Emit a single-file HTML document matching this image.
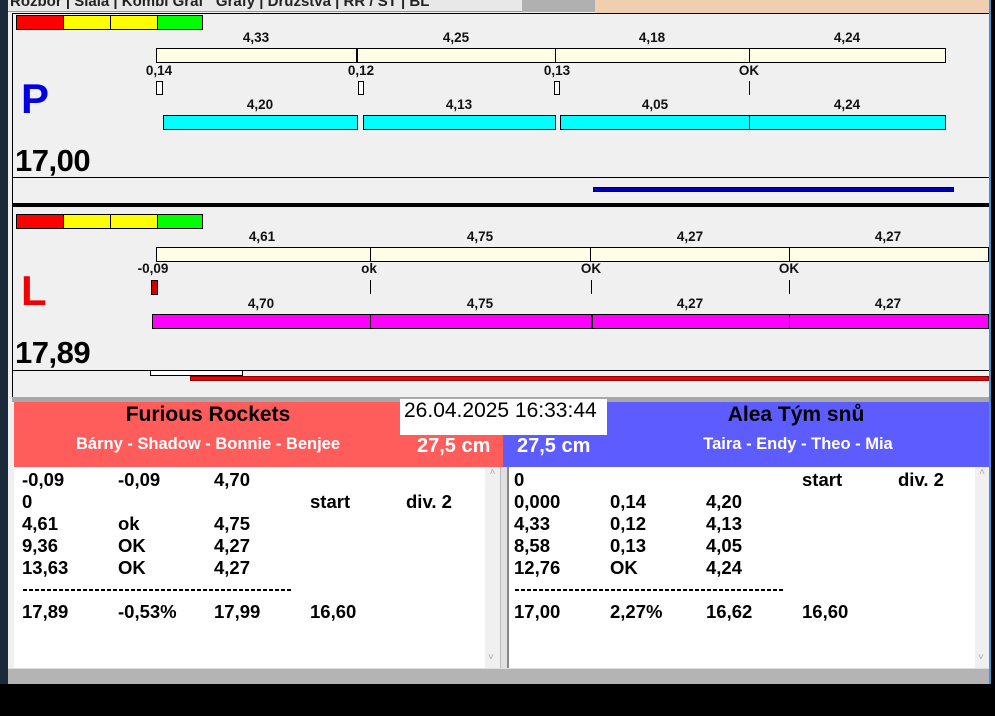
<!DOCTYPE html>
<html><head><meta charset="utf-8"><style>
*{margin:0;padding:0;box-sizing:border-box}
body{width:995px;height:716px;background:#000;position:relative;overflow:hidden;font-family:"Liberation Sans",sans-serif}
div{position:absolute}
.c{transform:translateX(-50%);font-weight:bold;font-size:13.5px;white-space:nowrap;color:#111}
.bx{border:1px solid #000}
.t{font-weight:bold;font-size:18.5px;color:#000;white-space:nowrap}
.d{height:2px;width:269px;background:repeating-linear-gradient(90deg,#000 0 4px,transparent 4px 6px)}
</style></head><body>
<div style="left:8px;top:0;width:982px;height:684px;background:#f0f0f0"></div>
<div style="left:989px;top:0;width:2px;height:684px;background:#4a90d0"></div>
<div style="left:0;top:0;width:8px;height:684px;background:#1a2a3a"></div>
<div style="left:8px;top:0;width:514px;height:12px;background:#e8e8e8;border-bottom:1px solid #999"></div>
<div style="left:522px;top:0;width:73px;height:12px;background:#b0b0b0"></div>
<div style="left:595px;top:0;width:394px;height:13px;background:#efcfb0"></div>
<div style="left:10px;top:-7px;font-size:15px;font-weight:bold;color:#222;white-space:nowrap">Rozbor | Siala | Kombi Graf &nbsp; Grafy | Družstva | RR / ST | BL</div>
<div style="left:12px;top:13px;width:977px;height:385px;border-top:1px solid #000;border-left:1px solid #000;background:#f0f0f0"></div>
<div class="bx" style="left:16px;top:15px;width:48px;height:15px;background:#f00"></div>
<div class="bx" style="left:63px;top:15px;width:48px;height:15px;background:#ff0"></div>
<div class="bx" style="left:110px;top:15px;width:48px;height:15px;background:#ff0"></div>
<div class="bx" style="left:157px;top:15px;width:46px;height:15px;background:#0f0"></div>
<div class="bx" style="left:156px;top:48px;width:790px;height:15px;background:#fffde6"></div>
<div style="left:356px;top:48px;width:2px;height:15px;background:#000"></div>
<div style="left:555px;top:48px;width:1px;height:15px;background:#000"></div>
<div style="left:749px;top:48px;width:1px;height:15px;background:#000"></div>
<div class="c" style="left:256px;top:30px">4,33</div>
<div class="c" style="left:456px;top:30px">4,25</div>
<div class="c" style="left:652px;top:30px">4,18</div>
<div class="c" style="left:847px;top:30px">4,24</div>
<div class="c" style="left:159px;top:63px">0,14</div>
<div class="c" style="left:361px;top:63px">0,12</div>
<div class="c" style="left:557px;top:63px">0,13</div>
<div class="c" style="left:749px;top:63px">OK</div>
<div class="bx" style="left:156px;top:81px;width:7px;height:14px;background:#fff"></div>
<div class="bx" style="left:358px;top:81px;width:6px;height:14px;background:#fff"></div>
<div class="bx" style="left:554px;top:81px;width:6px;height:14px;background:#fff"></div>
<div style="left:749px;top:81px;width:1px;height:14px;background:#000"></div>
<div class="c" style="left:260px;top:97px">4,20</div>
<div class="c" style="left:459px;top:97px">4,13</div>
<div class="c" style="left:655px;top:97px">4,05</div>
<div class="c" style="left:847px;top:97px">4,24</div>
<div class="bx" style="left:163px;top:115px;width:195px;height:15px;background:#0ff"></div>
<div class="bx" style="left:363px;top:115px;width:193px;height:15px;background:#0ff"></div>
<div class="bx" style="left:560px;top:115px;width:190px;height:15px;background:#0ff"></div>
<div class="bx" style="left:749px;top:115px;width:197px;height:15px;background:#0ff"></div>
<div style="left:21px;top:75px;font-size:42px;font-weight:bold;color:#0000e0">P</div>
<div style="left:15px;top:143px;font-size:31px;font-weight:bold;color:#000;letter-spacing:-0.5px">17,00</div>
<div style="left:12px;top:177px;width:977px;height:1px;background:#000"></div>
<div style="left:593px;top:187px;width:361px;height:5px;background:#0000b0;border:1px solid #000"></div>
<div style="left:12px;top:203px;width:977px;height:4px;background:#000"></div>
<div class="bx" style="left:16px;top:214px;width:48px;height:15px;background:#f00"></div>
<div class="bx" style="left:63px;top:214px;width:48px;height:15px;background:#ff0"></div>
<div class="bx" style="left:110px;top:214px;width:48px;height:15px;background:#ff0"></div>
<div class="bx" style="left:157px;top:214px;width:46px;height:15px;background:#0f0"></div>
<div class="bx" style="left:156px;top:247px;width:833px;height:15px;background:#fffde6"></div>
<div style="left:370px;top:247px;width:1px;height:15px;background:#000"></div>
<div style="left:590px;top:247px;width:1px;height:15px;background:#000"></div>
<div style="left:789px;top:247px;width:1px;height:15px;background:#000"></div>
<div class="c" style="left:262px;top:229px">4,61</div>
<div class="c" style="left:480px;top:229px">4,75</div>
<div class="c" style="left:690px;top:229px">4,27</div>
<div class="c" style="left:888px;top:229px">4,27</div>
<div class="c" style="left:153px;top:261px">-0,09</div>
<div class="c" style="left:369px;top:261px">ok</div>
<div class="c" style="left:591px;top:261px">OK</div>
<div class="c" style="left:789px;top:261px">OK</div>
<div class="bx" style="left:151px;top:280px;width:7px;height:15px;background:#d00000"></div>
<div style="left:370px;top:280px;width:1px;height:14px;background:#000"></div>
<div style="left:591px;top:280px;width:1px;height:14px;background:#000"></div>
<div style="left:789px;top:280px;width:1px;height:14px;background:#000"></div>
<div class="c" style="left:261px;top:296px">4,70</div>
<div class="c" style="left:480px;top:296px">4,75</div>
<div class="c" style="left:690px;top:296px">4,27</div>
<div class="c" style="left:888px;top:296px">4,27</div>
<div class="bx" style="left:152px;top:314px;width:837px;height:15px;background:#f0f"></div>
<div style="left:370px;top:314px;width:1px;height:15px;background:#000"></div>
<div style="left:591px;top:314px;width:2px;height:15px;background:#000"></div>
<div style="left:789px;top:314px;width:1px;height:15px;background:#000"></div>
<div style="left:21px;top:267px;font-size:42px;font-weight:bold;color:#f00000">L</div>
<div style="left:15px;top:335px;font-size:31px;font-weight:bold;color:#000;letter-spacing:-0.5px">17,89</div>
<div style="left:12px;top:370px;width:977px;height:1px;background:#000"></div>
<div class="bx" style="left:150px;top:370px;width:93px;height:6px;background:#fff"></div>
<div style="left:190px;top:376px;width:799px;height:5px;background:#f00000;border:1px solid #800"></div>
<div style="left:12px;top:397px;width:977px;height:5px;background:#a8a8a8"></div>
<div style="left:14px;top:402px;width:489px;height:65px;background:#ff5c5c"></div>
<div style="left:503px;top:402px;width:486px;height:65px;background:#5c5cff"></div>
<div style="left:400px;top:399px;width:207px;height:36px;background:#fff"></div>
<div style="left:404px;top:399px;font-size:21px;color:#000">26.04.2025 16:33:44</div>
<div class="c" style="left:208px;top:403px;font-size:21px;color:#000">Furious Rockets</div>
<div class="c" style="left:208px;top:435px;font-size:16.5px;color:#fff">Bárny - Shadow - Bonnie - Benjee</div>
<div style="left:417px;top:435px;font-size:20px;font-weight:bold;color:#fff">27,5 cm</div>
<div style="left:517px;top:435px;font-size:20px;font-weight:bold;color:#fff">27,5 cm</div>
<div class="c" style="left:796px;top:403px;font-size:21px;color:#000">Alea Tým snů</div>
<div class="c" style="left:798px;top:435px;font-size:16.5px;color:#fff">Taira - Endy - Theo - Mia</div>
<div style="left:14px;top:467px;width:471px;height:201px;background:#fff"></div>
<div style="left:485px;top:467px;width:15px;height:201px;background:#f0f0f0;color:#aaa;font-size:10px;text-align:center">˄<div style="left:3px;top:185px">˅</div></div>
<div style="left:500px;top:467px;width:9px;height:201px;background:#e0e0e0;border-left:1px solid #bbb;border-right:2px solid #888"></div>
<div style="left:509px;top:467px;width:466px;height:201px;background:#fff"></div>
<div style="left:975px;top:467px;width:14px;height:201px;background:#f0f0f0;color:#aaa;font-size:10px;text-align:center">˄<div style="left:3px;top:185px">˅</div></div>
<div style="left:8px;top:668px;width:981px;height:16px;background:#b4b4b4;border-top:1px solid #ddd"></div>
<div class="t" style="left:22px;top:469px">-0,09</div><div class="t" style="left:118px;top:469px">-0,09</div><div class="t" style="left:214px;top:469px">4,70</div>
<div class="t" style="left:22px;top:491px">0</div><div class="t" style="left:310px;top:491px">start</div><div class="t" style="left:406px;top:491px">div. 2</div>
<div class="t" style="left:22px;top:513px">4,61</div><div class="t" style="left:118px;top:513px">ok</div><div class="t" style="left:214px;top:513px">4,75</div>
<div class="t" style="left:22px;top:535px">9,36</div><div class="t" style="left:118px;top:535px">OK</div><div class="t" style="left:214px;top:535px">4,27</div>
<div class="t" style="left:22px;top:557px">13,63</div><div class="t" style="left:118px;top:557px">OK</div><div class="t" style="left:214px;top:557px">4,27</div>
<div class="d" style="left:23px;top:589px"></div>
<div class="t" style="left:22px;top:601px">17,89</div><div class="t" style="left:118px;top:601px">-0,53%</div><div class="t" style="left:214px;top:601px">17,99</div><div class="t" style="left:310px;top:601px">16,60</div>
<div class="t" style="left:514px;top:469px">0</div><div class="t" style="left:802px;top:469px">start</div><div class="t" style="left:898px;top:469px">div. 2</div>
<div class="t" style="left:514px;top:491px">0,000</div><div class="t" style="left:610px;top:491px">0,14</div><div class="t" style="left:706px;top:491px">4,20</div>
<div class="t" style="left:514px;top:513px">4,33</div><div class="t" style="left:610px;top:513px">0,12</div><div class="t" style="left:706px;top:513px">4,13</div>
<div class="t" style="left:514px;top:535px">8,58</div><div class="t" style="left:610px;top:535px">0,13</div><div class="t" style="left:706px;top:535px">4,05</div>
<div class="t" style="left:514px;top:557px">12,76</div><div class="t" style="left:610px;top:557px">OK</div><div class="t" style="left:706px;top:557px">4,24</div>
<div class="d" style="left:515px;top:589px"></div>
<div class="t" style="left:514px;top:601px">17,00</div><div class="t" style="left:610px;top:601px">2,27%</div><div class="t" style="left:706px;top:601px">16,62</div><div class="t" style="left:802px;top:601px">16,60</div>
</body></html>
